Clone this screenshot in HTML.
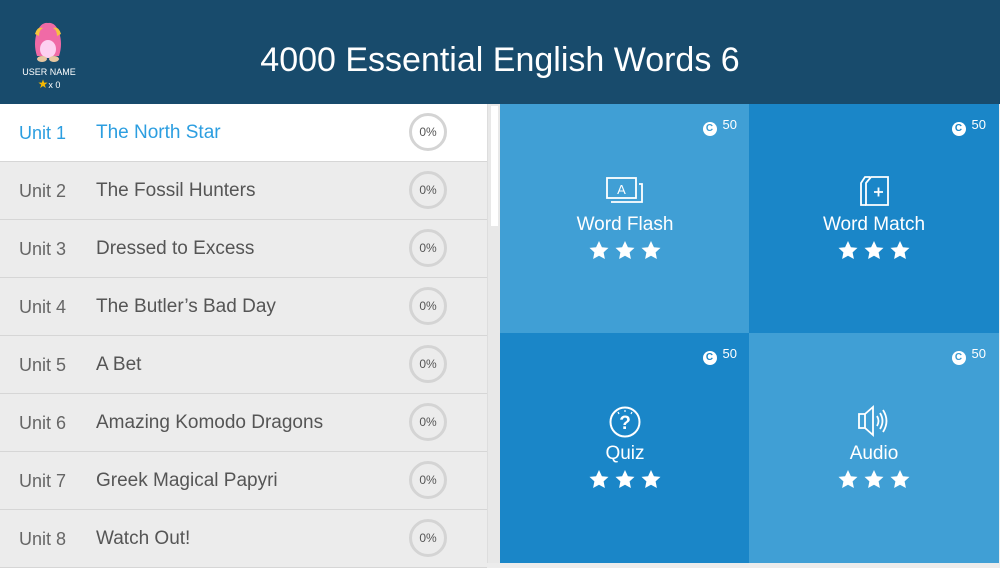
<!DOCTYPE html><html><head><style>
*{margin:0;padding:0;box-sizing:border-box}
body{width:1000px;height:563px;overflow:hidden;font-family:"Liberation Sans",sans-serif;background:#ececec;position:relative}
.hdr{position:absolute;left:0;top:0;width:1000px;height:104px;background:#184b6c}
.hdr h1{position:absolute;left:0;top:41px;width:1000px;text-align:center;font-weight:normal;color:#fff;font-size:34px}
.user{position:absolute;left:18px;top:67px;width:62px;text-align:center;color:#fff;font-size:9px}
.row{position:absolute;left:0;width:487px;height:58px;border-bottom:1px solid #d6d6d6;background:#ececec}
.row .u{position:absolute;left:19px;top:19px;font-size:18px;color:#666}
.row .t{position:absolute;left:96px;top:18px;font-size:19px;color:#555}
.row .c{position:absolute;left:409px;top:9px;width:38px;height:38px;border:3px solid #d4d4d4;border-radius:50%;font-size:12px;color:#555;text-align:center;line-height:32px}
.row.a{background:#fff}.row.a .u,.row.a .t{color:#2c9ee0}
.sb{position:absolute;left:487px;top:104px;width:13px;height:459px;background:#e8e8e8;border-left:1px solid #ddd}
.sb div{position:absolute;left:3px;top:2px;width:7px;height:120px;background:#fff}
.tile{position:absolute;width:250px;height:230px;color:#fff;text-align:center}
.tile .coin{position:absolute;right:13px;top:13px;font-size:13px}
.tile .coin b{display:inline-block;width:14px;height:14px;border-radius:50%;background:#fff;color:#3a9bd3;font-size:10px;line-height:14px;vertical-align:-2px;margin-right:6px}
.tile .ic{position:absolute;left:0;top:70px;width:250px;height:36px}
.tile .nm{position:absolute;left:0;right:0;top:110px;font-size:19px}
.tile .st{position:absolute;left:0;top:136px;width:250px;height:22px}
.l{background:#409fd5}.d{background:#1a86c8}
</style></head><body>
<svg width="0" height="0" style="position:absolute"><defs><path id="s" d="M10 0 L12.9 6.2 L19.5 6.9 L14.6 11.4 L15.9 18 L10 14.7 L4.1 18 L5.4 11.4 L0.5 6.9 L7.1 6.2Z" fill="#fff"/></defs></svg>
<div class="hdr">
<svg style="position:absolute;left:31px;top:22px" width="34" height="42" viewBox="0 0 34 42"><path d="M6 10 Q10 0 17 1 Q24 0 28 10 Q32 22 28 34 L6 34 Q2 22 6 10Z" fill="#f06aa6"/><path d="M4 12 Q6 4 12 6 Q8 8 8 14Z M30 12 Q28 4 22 6 Q26 8 26 14Z" fill="#f7c23e"/><ellipse cx="17" cy="27" rx="8" ry="9" fill="#fdd0f0"/><ellipse cx="11" cy="37" rx="5" ry="3" fill="#e8c7a0"/><ellipse cx="23" cy="37" rx="5" ry="3" fill="#e8c7a0"/></svg>
<div class="user">USER NAME<br><span style="color:#f5b800;font-size:12px">★</span>x 0</div>
<h1>4000 Essential English Words 6</h1>
</div>
<div class="row a" style="top:104px"><span class="u">Unit 1</span><span class="t">The North Star</span><span class="c">0%</span></div>
<div class="row" style="top:162px"><span class="u">Unit 2</span><span class="t">The Fossil Hunters</span><span class="c">0%</span></div>
<div class="row" style="top:220px"><span class="u">Unit 3</span><span class="t">Dressed to Excess</span><span class="c">0%</span></div>
<div class="row" style="top:278px"><span class="u">Unit 4</span><span class="t">The Butler’s Bad Day</span><span class="c">0%</span></div>
<div class="row" style="top:336px"><span class="u">Unit 5</span><span class="t">A Bet</span><span class="c">0%</span></div>
<div class="row" style="top:394px"><span class="u">Unit 6</span><span class="t">Amazing Komodo Dragons</span><span class="c">0%</span></div>
<div class="row" style="top:452px"><span class="u">Unit 7</span><span class="t">Greek Magical Papyri</span><span class="c">0%</span></div>
<div class="row" style="top:510px"><span class="u">Unit 8</span><span class="t">Watch Out!</span><span class="c">0%</span></div>
<div class="sb"><div></div></div>

<div class="tile l" style="left:500px;top:104px"><div class="coin"><b>C</b>50</div>
<svg class="ic" viewBox="0 0 250 36"><g fill="none" stroke="#fff" stroke-width="1.8"><rect x="107" y="4" width="29" height="20"/><path d="M111 28 H142 V10 H139"/></g><text x="121.5" y="20" fill="#fff" font-size="13" text-anchor="middle" font-family="Liberation Sans">A</text></svg>
<div class="nm">Word Flash</div>
<svg class="st" viewBox="0 0 250 22"><use href="#s" x="89" y="1"/><use href="#s" x="115" y="1"/><use href="#s" x="141" y="1"/></svg></div>

<div class="tile d" style="left:749px;top:104px"><div class="coin"><b style="color:#1a86c8">C</b>50</div>
<svg class="ic" viewBox="0 0 250 36"><g fill="none" stroke="#fff" stroke-width="1.8"><path d="M121 3 H116 L112 9 V31 H117"/><path d="M122 3 H139 V31 H117 V9 Z"/><path d="M125 18 H134 M129.5 13.5 V22.5"/></g></svg>
<div class="nm">Word Match</div>
<svg class="st" viewBox="0 0 250 22"><use href="#s" x="89" y="1"/><use href="#s" x="115" y="1"/><use href="#s" x="141" y="1"/></svg></div>

<div class="tile d" style="left:500px;top:333px"><div class="coin"><b style="color:#1a86c8">C</b>50</div>
<svg class="ic" viewBox="0 0 250 36"><circle cx="125" cy="19" r="14.5" fill="none" stroke="#fff" stroke-width="2"/><text x="125" y="26" fill="#fff" font-size="19" font-weight="bold" text-anchor="middle" font-family="Liberation Sans">?</text><path d="M125 7 v2 M118 9 l1 2 M132 9 l-1 2" stroke="#fff" stroke-width="1.2"/></svg>
<div class="nm">Quiz</div>
<svg class="st" viewBox="0 0 250 22"><use href="#s" x="89" y="1"/><use href="#s" x="115" y="1"/><use href="#s" x="141" y="1"/></svg></div>

<div class="tile l" style="left:749px;top:333px"><div class="coin"><b>C</b>50</div>
<svg class="ic" viewBox="0 0 250 36"><g fill="none" stroke="#fff" stroke-width="1.8"><path d="M110 11 H116 L124 4 V32 L116 25 H110 Z M116 11 V25"/><path d="M128 13 Q131 18 128 23 M131 10 Q136 18 131 26 M134 7 Q141 18 134 29"/></g></svg>
<div class="nm">Audio</div>
<svg class="st" viewBox="0 0 250 22"><use href="#s" x="89" y="1"/><use href="#s" x="115" y="1"/><use href="#s" x="141" y="1"/></svg></div>
</body></html>
